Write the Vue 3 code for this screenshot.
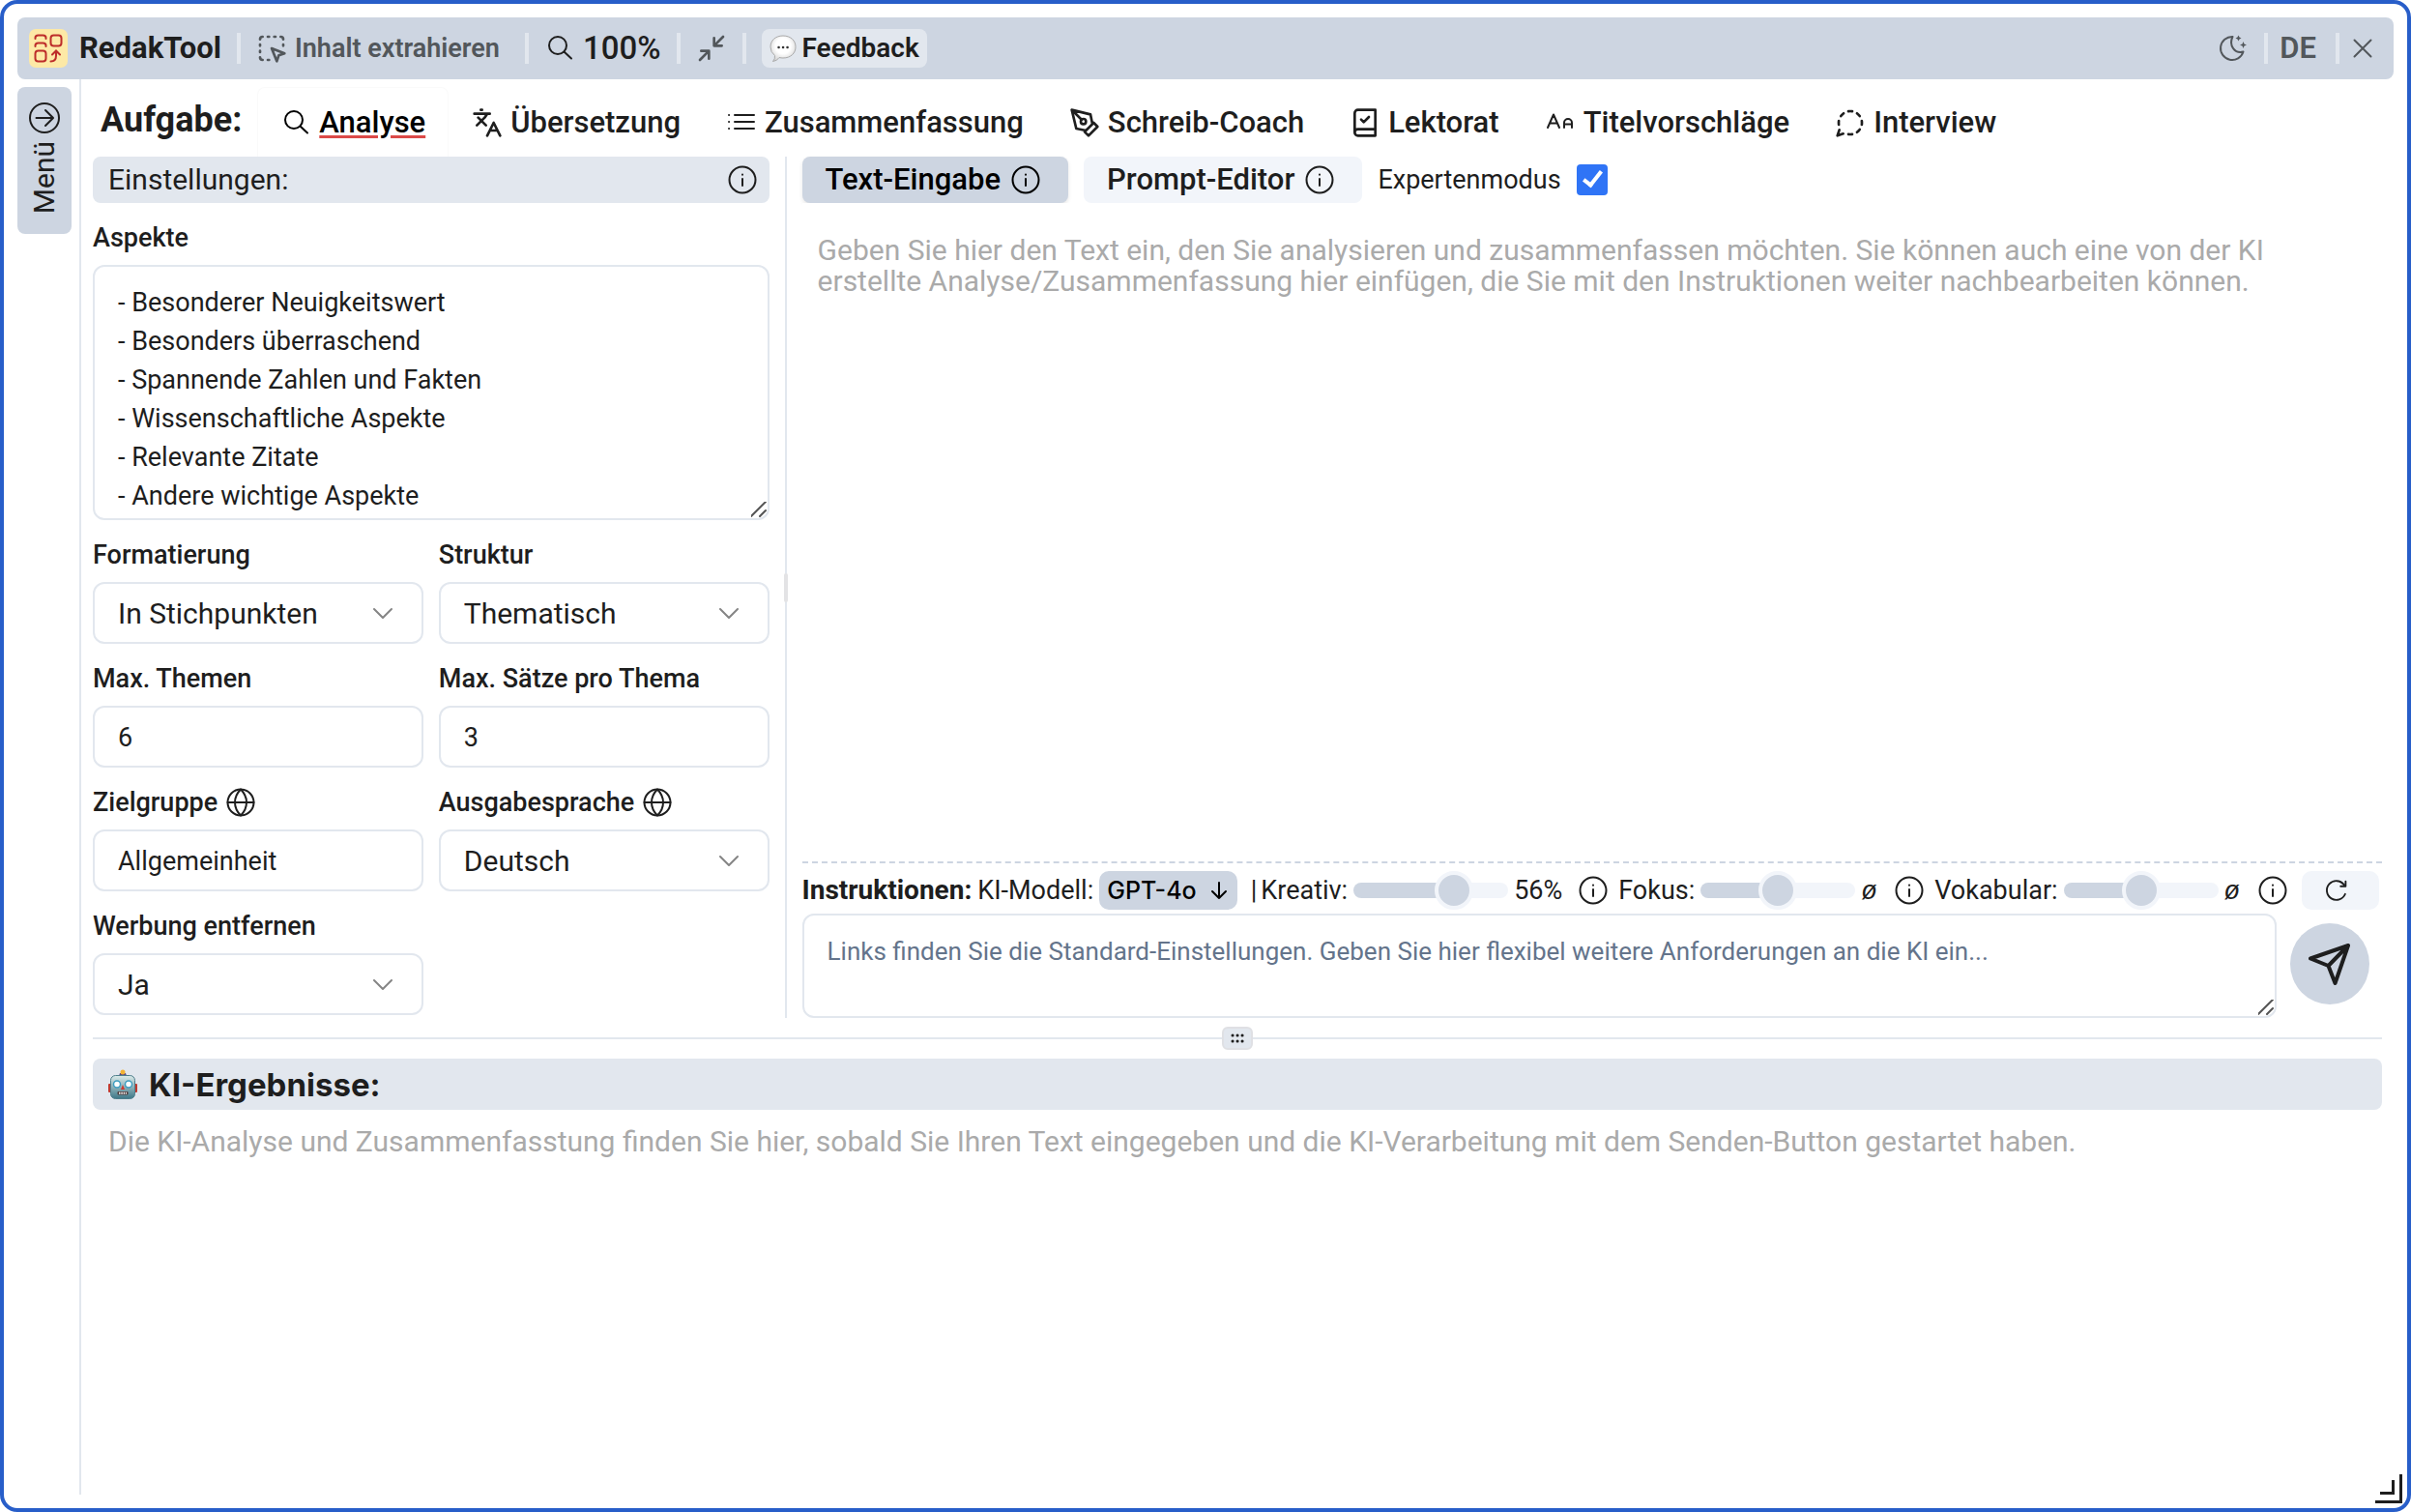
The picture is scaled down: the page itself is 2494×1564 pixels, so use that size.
<script setup>
import { ref } from 'vue'

const tasks = [
  { id: 'analyse', label: 'Analyse', icon: 'search' },
  { id: 'uebersetzung', label: 'Übersetzung', icon: 'languages' },
  { id: 'zusammenfassung', label: 'Zusammenfassung', icon: 'list' },
  { id: 'coach', label: 'Schreib-Coach', icon: 'pen' },
  { id: 'lektorat', label: 'Lektorat', icon: 'book' },
  { id: 'titel', label: 'Titelvorschläge', icon: 'case' },
  { id: 'interview', label: 'Interview', icon: 'dialog' },
]
const activeTask = ref('analyse')

const aspects = ref(`- Besonderer Neuigkeitswert
- Besonders überraschend
- Spannende Zahlen und Fakten
- Wissenschaftliche Aspekte
- Relevante Zitate
- Andere wichtige Aspekte`)

const fields = ref([
  { id: 'format', label: 'Formatierung', type: 'select', value: 'In Stichpunkten', options: ['In Stichpunkten', 'Als Fließtext'] },
  { id: 'struktur', label: 'Struktur', type: 'select', value: 'Thematisch', options: ['Thematisch', 'Chronologisch'] },
  { id: 'themen', label: 'Max. Themen', type: 'input', value: '6' },
  { id: 'saetze', label: 'Max. Sätze pro Thema', type: 'input', value: '3' },
  { id: 'zielgruppe', label: 'Zielgruppe', type: 'input', value: 'Allgemeinheit', globe: true },
  { id: 'sprache', label: 'Ausgabesprache', type: 'select', value: 'Deutsch', options: ['Deutsch', 'Englisch'], globe: true },
  { id: 'werbung', label: 'Werbung entfernen', type: 'select', value: 'Ja', options: ['Ja', 'Nein'] },
])

const sliders = ref([
  { id: 'kreativ', label: 'Kreativ:', value: 70, unit: '56%' },
  { id: 'fokus', label: 'Fokus:', value: 50, unit: '' },
  { id: 'vokabular', label: 'Vokabular:', value: 50, unit: '' },
])
const expert = ref(true)
const text = ref('')
const instructions = ref('')
</script>

<template>
  <div class="window">
    <svg class="defs" width="0" height="0" aria-hidden="true">
      <defs>
        <symbol id="search" viewBox="0 0 32 32"><circle cx="14" cy="13" r="9" /><path d="M20.500 19.500 28 26.500" /></symbol>
        <symbol id="languages" viewBox="0 0 24 24"><path d="m5 8 6 6M4 14l6-6 2-3M2 5h12M7 2h1M22 22l-5-10-5 10M14 18h6" /></symbol>
        <symbol id="list" viewBox="0 0 32 32"><path d="M9 8h20M9 15h20M9 22h20M3 8h.1M3 15h.1M3 22h.1" /></symbol>
        <symbol id="pen" viewBox="0 0 24 24"><path d="m12 19 7-7 3 3-7 7-3-3zM18 13l-1.500-7.500L2 2l3.500 14.500L13 18l5-5zM2 2l7.600 7.600" /><circle cx="11" cy="11" r="2" /></symbol>
        <symbol id="book" viewBox="0 0 24 24"><path d="M4 19.500v-15A2.500 2.500 0 0 1 6.500 2H20v20H6.500a2.500 2.500 0 0 1 0-5H20M9 9.500l2 2 4-4" /></symbol>
        <symbol id="case" viewBox="0 0 32 32"><path d="M3 21 9 7.500 15 21M5 16.500h8M20 21v-5a4 4 0 0 1 8 0v5M20 17.500h8" /></symbol>
        <symbol id="dialog" viewBox="0 0 24 24"><path d="M13.500 3.100C13 3 12.500 3 12 3s-1 0-1.500.1M19.300 6.800a10.500 10.500 0 0 0-2.100-2.100M20.900 13.500c.1-.5.1-1 .1-1.500s0-1-.1-1.500M17.200 19.300a10.500 10.500 0 0 0 2.100-2.100M10.500 20.900c.5.1 1 .1 1.500.1s1 0 1.500-.1M3.500 17.500 2 22l4.500-1.500M3.100 10.500c-.1.500-.1 1-.1 1.500s0 1 .1 1.500M6.800 4.700a10.500 10.500 0 0 0-2.100 2.100" /></symbol>
        <symbol id="info" viewBox="0 0 32 32"><circle cx="16" cy="16" r="13.500" /><path d="M16 15v7M16 10.500v.3" /></symbol>
        <symbol id="globe" viewBox="0 0 32 32"><circle cx="16" cy="16" r="13.500" /><path d="M2.500 16h27M16 2.500c-8 8-8 19 0 27M16 2.500c8 8 8 19 0 27" /></symbol>
        <symbol id="extract" viewBox="0 0 24 24"><path d="m12 12 10 4-4.500 1.500L16 22zM5 3a2 2 0 0 0-2 2M19 3a2 2 0 0 1 2 2M5 21a2 2 0 0 1-2-2M9 3h1M9 21h1M14 3h1M3 9v1M21 9v1M3 14v1" /></symbol>
        <symbol id="shrink" viewBox="0 0 24 24"><path d="M4 14h6v6M20 10h-6V4M14 10l7-7M3 21l7-7" /></symbol>
        <symbol id="moon" viewBox="0 0 32 32"><path d="M15.500 4A12 12 0 1 0 26.500 19.500C18 22 11 13 15.500 4z" /><path class="solid" d="m21.500 2.500 1 2 2 1-2 1-1 2-1-2-2-1 2-1zM26.500 9l1 2.500 2.500 1-2.500 1-1 2.500-1-2.500-2.500-1 2.500-1z" /></symbol>
        <symbol id="close" viewBox="0 0 32 32"><path d="m7.500 7.500 17 17M24.500 7.500l-17 17" /></symbol>
        <symbol id="chevron" viewBox="0 0 32 32"><path d="m6 12 9 9 9-9" /></symbol>
        <symbol id="grip" viewBox="0 0 16 16"><path d="M15 0 0 15M15 9l-6 6" /></symbol>
      </defs>
    </svg>

    <header class="topbar">
      <svg class="logo" viewBox="0 0 40 40" aria-hidden="true">
        <rect width="40" height="40" rx="7" fill="#fde9a6" />
        <g fill="none" stroke="#bd2d2a" stroke-width="2" stroke-linecap="round">
          <path d="M6.500 10V9q0-2.500 3-2.500h5q3 0 3 2.500v1M6.500 18v-1q0-2.500 3-2.500h5q3 0 3 2.500v1" />
          <rect x="22.500" y="6.500" width="11" height="11" rx="3" />
          <rect x="6.500" y="22.500" width="11" height="11" rx="3" />
          <path d="M22.500 33.500q5.500 0 5.500-6V23M24 26.500l4-4 4 4" />
        </g>
      </svg>
      <strong class="brand">RedakTool</strong>
      <span class="sep"></span>
      <button class="bar-btn muted extract"><svg class="icon"><use href="#extract" /></svg>Inhalt extrahieren</button>
      <span class="sep"></span>
      <button class="bar-btn zoom"><svg class="icon"><use href="#search" /></svg>100%</button>
      <span class="sep"></span>
      <button class="bar-btn muted" aria-label="Verkleinern"><svg class="icon"><use href="#shrink" /></svg></button>
      <span class="sep"></span>
      <button class="feedback">
        <svg width="28" height="28" viewBox="0 0 28 28" aria-hidden="true">
          <defs><radialGradient id="bubble" cx=".5" cy=".4" r=".6"><stop offset=".5" stop-color="#fff" /><stop offset="1" stop-color="#d5d5d5" /></radialGradient></defs>
          <path d="M14 1c8 0 13 5 13 11.500S22 24 14 24q-2 0-4-.5Q8 27 3.500 27.500 6 25 5.500 21.500 1 18 1 12.500C1 6 6 1 14 1z" fill="url(#bubble)" stroke="#aaa" />
          <path d="M9.500 13h.1M14 13h.1M18.500 13h.1" stroke="#333" stroke-width="2.500" stroke-linecap="round" />
        </svg>Feedback
      </button>
      <span class="spacer"></span>
      <button class="bar-btn muted" aria-label="Dunkler Modus"><svg class="icon"><use href="#moon" /></svg></button>
      <span class="sep"></span>
      <button class="bar-btn muted lang">DE</button>
      <span class="sep"></span>
      <button class="bar-btn muted close" aria-label="Schließen"><svg class="icon"><use href="#close" /></svg></button>
    </header>

    <div class="body">
      <aside class="side">
        <button class="menu">
          <svg class="icon" viewBox="0 0 32 32"><circle cx="16" cy="16" r="15" /><path d="M7.500 16h17M17 8l8 8-8 8" /></svg>
          <span>Menü</span>
        </button>
      </aside>

      <main class="main">
        <nav class="tasks">
          <h1>Aufgabe:</h1>
          <button v-for="t in tasks" :key="t.id" class="task" :class="{ active: t.id === activeTask }" @click="activeTask = t.id">
            <svg class="icon"><use :href="'#' + t.icon" /></svg><span>{{ t.label }}</span>
          </button>
        </nav>

        <div class="panes">
          <section class="settings">
            <h2 class="strip">Einstellungen:<svg class="icon"><use href="#info" /></svg></h2>
            <div class="field">
              <label for="aspekte">Aspekte</label>
              <div class="area">
                <textarea id="aspekte" v-model="aspects" class="box aspects"></textarea>
                <svg class="corner"><use href="#grip" /></svg>
              </div>
            </div>
            <div class="grid">
              <div v-for="f in fields" :key="f.id" class="field">
                <label :for="f.id">{{ f.label }}<svg v-if="f.globe" class="icon"><use href="#globe" /></svg></label>
                <div v-if="f.type === 'select'" class="area">
                  <select :id="f.id" v-model="f.value" class="box">
                    <option v-for="o in f.options" :key="o">{{ o }}</option>
                  </select>
                  <svg class="arrow"><use href="#chevron" /></svg>
                </div>
                <input v-else :id="f.id" v-model="f.value" class="box" type="text" />
              </div>
            </div>
            <span class="pane-handle"></span>
          </section>

          <section class="editor">
            <div class="modes">
              <button class="mode current">Text-Eingabe<svg class="icon"><use href="#info" /></svg></button>
              <button class="mode">Prompt-Editor<svg class="icon"><use href="#info" /></svg></button>
              <label class="expert">Expertenmodus<input v-model="expert" type="checkbox" /></label>
            </div>
            <textarea v-model="text" class="source" aria-label="Text-Eingabe" placeholder="Geben Sie hier den Text ein, den Sie analysieren und zusammenfassen möchten. Sie können auch eine von der KI erstellte Analyse/Zusammenfassung hier einfügen, die Sie mit den Instruktionen weiter nachbearbeiten können."></textarea>
            <div class="controls">
              <strong>Instruktionen:</strong>
              <span class="model-label">KI-Modell:</span>
              <button class="model">GPT-4o<svg width="18" height="20" viewBox="0 0 18 20"><path d="M9 2v16M2 11l7 7 7-7" /></svg></button>
              <span class="bar">|</span>
              <div v-for="s in sliders" :key="s.id" class="slider">
                <label :for="s.id">{{ s.label }}</label>
                <input :id="s.id" v-model="s.value" type="range" min="0" max="100" :style="{ '--fill': s.value + '%' }" />
                <output :class="{ mean: !s.unit }">{{ s.unit || 'ø' }}</output>
                <svg class="icon"><use href="#info" /></svg>
              </div>
              <button class="reset" aria-label="Zurücksetzen"><svg class="icon" viewBox="0 0 32 32"><path d="M25.500 20A10.500 10.500 0 1 1 24 9.500M26 6v5.500h-5.500" /></svg></button>
            </div>
            <div class="prompt">
              <div class="area grow">
                <textarea v-model="instructions" class="box instr" aria-label="Instruktionen" placeholder="Links finden Sie die Standard-Einstellungen. Geben Sie hier flexibel weitere Anforderungen an die KI ein..."></textarea>
                <svg class="corner"><use href="#grip" /></svg>
              </div>
              <button class="send" aria-label="Senden"><svg width="48" height="48" viewBox="0 0 48 48"><path d="M43 5 4 18.500 22.500 26 29.500 44zM43 5 22.500 26" /></svg></button>
            </div>
          </section>
        </div>

        <div class="divider">
          <span class="divider-grip"><svg width="16" height="12" viewBox="0 0 16 12"><path d="M3 3h.1M8 3h.1M13 3h.1M3 9h.1M8 9h.1M13 9h.1" /></svg></span>
        </div>

        <section class="results">
          <h2 class="strip result-title">
            <svg width="30" height="32" viewBox="0 0 30 32" aria-hidden="true">
              <defs><linearGradient id="metal" x2="0" y2="1"><stop stop-color="#dcebea" /><stop offset="1" stop-color="#3d7787" /></linearGradient></defs>
              <rect y="15" width="5" height="9" rx="1" fill="#c0392f" /><rect x="25" y="15" width="5" height="9" rx="1" fill="#c0392f" />
              <path d="M11 7h8l-1-3h-6z" fill="#5a4a86" /><circle cx="15" cy="3" r="2.500" fill="#f2b233" />
              <rect x="2.500" y="6.500" width="25" height="24" rx="5" fill="url(#metal)" stroke="#4f7f8c" />
              <circle cx="9" cy="15.500" r="3.500" fill="#fff" stroke="#3e9dc0" stroke-width="1.500" /><circle cx="21" cy="15.500" r="3.500" fill="#fff" stroke="#3e9dc0" stroke-width="1.500" />
              <path d="m15 16 2 5h-4z" fill="#d0392f" /><rect x="9.500" y="23" width="11" height="3.500" rx="1" fill="#503c3c" />
              <path d="M11 24.800h8" stroke="#eee" stroke-width="2" stroke-dasharray="1.500 .8" />
            </svg>KI-Ergebnisse:
          </h2>
          <p>Die KI-Analyse und Zusammenfasstung finden Sie hier, sobald Sie Ihren Text eingegeben und die KI-Verarbeitung mit dem Senden-Button gestartet haben.</p>
        </section>
      </main>
    </div>
    <svg class="window-grip" viewBox="0 0 28 30" aria-hidden="true"><path d="M26.500 0v28.500H0M18.500 6v13.500H5" /></svg>
  </div>
</template>

<style>
body { background: #fff; }
</style>

<style scoped>
.window {
  --ink: #1e1e1e; --muted: #52575b; --bar: #cdd5e1; --soft: #e2e7ee; --pale: #f2f5fa;
  position: relative; box-sizing: border-box; min-height: 100vh;
  display: flex; flex-direction: column; padding: 14px;
  border: 4px solid #285ec9; border-radius: 18px; background: #fff;
  font: 400 30px/32px Roboto, "Liberation Sans", sans-serif; color: var(--ink);
}
.window *, .window *::before { box-sizing: border-box; }
.defs { position: absolute; }
button, input, select, textarea { font: inherit; color: inherit; margin: 0; }
button { display: flex; align-items: center; border: 0; padding: 0; background: none; white-space: nowrap; }
h1, h2, p { margin: 0; }
svg { flex: none; }
.icon { display: block; width: 32px; height: 32px; }
.icon, .arrow, .corner, .model svg, .send svg, .divider-grip svg, .window-grip {
  fill: none; stroke: currentColor; stroke-width: 2; stroke-linecap: round; stroke-linejoin: round;
}
.solid { fill: currentColor; stroke: none; }

.topbar { display: flex; align-items: center; gap: 16px; height: 64px; padding: 0 16px 0 12px; border-radius: 8px; background: var(--bar); }
.logo { width: 40px; height: 40px; }
.brand { font-size: 31px; font-weight: 700; margin-left: -4px; }
.sep { width: 4px; height: 32px; background: var(--soft); }
.bar-btn { gap: 8px; }
.muted { color: var(--muted); }
.extract { font-size: 27px; font-weight: 600; padding-right: 10px; }
.zoom { font-size: 33px; font-weight: 500; }
.feedback { gap: 6px; height: 40px; padding: 0 8px; border-radius: 8px; background: var(--soft); font-size: 28px; font-weight: 600; }
.spacer { flex: 1; }
.lang { margin-left: -4px; padding-right: 4px; font-size: 31px; font-weight: 600; }
.close { margin-left: -8px; }

.body { flex: 1; display: flex; }
.side { padding: 8px 8px 0 0; border-right: 2px solid var(--soft); }
.menu { flex-direction: column; gap: 8px; width: 56px; height: 152px; padding-top: 16px; border-radius: 8px; background: var(--bar); }
.menu span { writing-mode: vertical-rl; transform: rotate(180deg); }
.main { flex: 1; min-width: 0; display: flex; flex-direction: column; padding: 8px 12px 0; }

.tasks { display: flex; height: 72px; }
.tasks h1 { padding: 0 16px 0 8px; font-size: 36px; line-height: 68px; font-weight: 700; }
.task { gap: 8px; padding: 0 23px; border: 1px solid transparent; border-bottom: 0; font-size: 31px; font-weight: 500; }
.task + .task { padding: 0 22px 0 23px; }
.task.active { border-color: #fafafa; border-radius: 8px 8px 0 0; color: #000; }
.task.active span { text-decoration: underline #dc4a48 3px; text-underline-offset: 3px; }

.panes { display: grid; grid-template-columns: minmax(0, 30fr) minmax(0, 69fr); }
.settings { position: relative; padding: 0 16px 3px 0; border-right: 2px solid var(--soft); }
.strip { display: flex; align-items: center; justify-content: space-between; height: 48px; padding: 0 12px 0 16px; border-radius: 8px; background: var(--soft); font-size: 30px; font-weight: 400; }
.field { display: flex; flex-direction: column; gap: 8px; margin-top: 16px; }
.field label { display: flex; align-items: center; gap: 8px; height: 40px; font-size: 27px; font-weight: 500; }
.grid { display: grid; grid-template-columns: 1fr 1fr; column-gap: 16px; }
.area { position: relative; display: flex; }
.box { display: block; width: 100%; height: 64px; padding: 2px 24px 0; border: 2px solid var(--soft); border-radius: 12px; outline: 0; background: #fff; font-size: 27px; resize: none; }
select.box { appearance: none; font-size: 30px; }
.aspects { height: 264px; padding-top: 17px; line-height: 40px; overflow: hidden; }
.arrow { position: absolute; right: 25px; top: 16px; width: 32px; height: 32px; color: #858585; }
.corner { position: absolute; right: 3px; bottom: 3px; width: 16px; height: 16px; color: #555; }
.pane-handle { position: absolute; right: -3px; top: 431px; width: 4px; height: 30px; border-radius: 2px; background: #e3e3e5; }

.editor { display: flex; flex-direction: column; padding-left: 16px; }
.modes { display: flex; align-items: center; gap: 16px; }
.mode { height: 48px; gap: 10px; padding: 0 28px 0 24px; border-radius: 8px; background: var(--pale); font-size: 31px; font-weight: 500; }
.current { background: var(--bar); color: #000; box-shadow: 0 2px 4px #0000001a; }
.expert { display: flex; align-items: center; gap: 16px; font-size: 27px; }
.expert input { appearance: none; width: 32px; height: 32px; border-radius: 4px; background: #2f74f6; }
.expert input:checked::before { content: ""; display: block; width: 11px; height: 20px; margin: 3px 0 0 11px; border: solid #fff; border-width: 0 4px 4px 0; transform: rotate(38deg); }
.source { flex: 1; padding: 33px 16px 0; border: 0; outline: 0; resize: none; border-bottom: 2px dashed var(--bar); }
.source::placeholder { color: #aaa; }
.controls { display: flex; align-items: center; height: 52px; padding: 8px 3px 4px 0; font-size: 27px; white-space: nowrap; }
.controls strong { font-size: 28px; font-weight: 700; margin-right: 6px; }
.model { gap: 14px; height: 40px; margin: 0 14px 0 6px; padding: 0 10px 0 8px; border-radius: 10px; background: var(--bar); color: #000; font: 500 25px/32px Inter, sans-serif; }
.bar { margin-right: 4px; }
.slider { display: flex; align-items: center; margin-right: 10px; }
.slider input { appearance: none; width: 160px; height: 40px; margin: 0 6px; background: none; }
.slider input::-webkit-slider-runnable-track { height: 16px; border-radius: 8px; background: linear-gradient(to right, var(--bar) var(--fill), var(--pale) var(--fill)); }
.slider input::-webkit-slider-thumb { appearance: none; width: 40px; height: 40px; margin-top: -12px; border: 4px solid var(--pale); border-radius: 50%; background: var(--bar); }
.slider output { min-width: 58px; margin-right: 8px; }
.slider output.mean { min-width: 26px; font: italic 400 27px/32px "Liberation Sans", sans-serif; }
.reset { justify-content: center; width: 80px; height: 40px; margin-left: auto; padding-right: 8px; border-radius: 10px; background: var(--pale); }
.reset .icon { width: 30px; height: 30px; }
.prompt { display: flex; align-items: center; gap: 14px; padding-right: 13px; }
.grow { flex: 1; }
.instr { height: 108px; padding-top: 21px; font-size: 26px; }
.instr::placeholder { color: #64748b; }
.send { justify-content: center; width: 82px; height: 84px; margin-bottom: 4px; border-radius: 50%; background: var(--bar); }
.send svg { stroke-width: 4; }

.divider { display: flex; justify-content: center; margin: 20px 0; height: 2px; background: var(--soft); position: relative; }
.divider-grip { position: absolute; top: -11px; display: grid; place-items: center; width: 32px; height: 24px; border: 2px solid #dfe0e4; border-radius: 6px; background: var(--soft); }
.divider-grip svg { stroke-width: 3; }
.result-title { justify-content: flex-start; gap: 12px; height: 53px; font: 700 33px/40px Inter, sans-serif; }
.results p { padding: 17px 16px 0; color: #aaa; }
.window-grip { position: absolute; right: 5px; bottom: 5px; width: 28px; height: 30px; stroke-width: 3; stroke-linecap: butt; stroke-linejoin: miter; }
</style>
